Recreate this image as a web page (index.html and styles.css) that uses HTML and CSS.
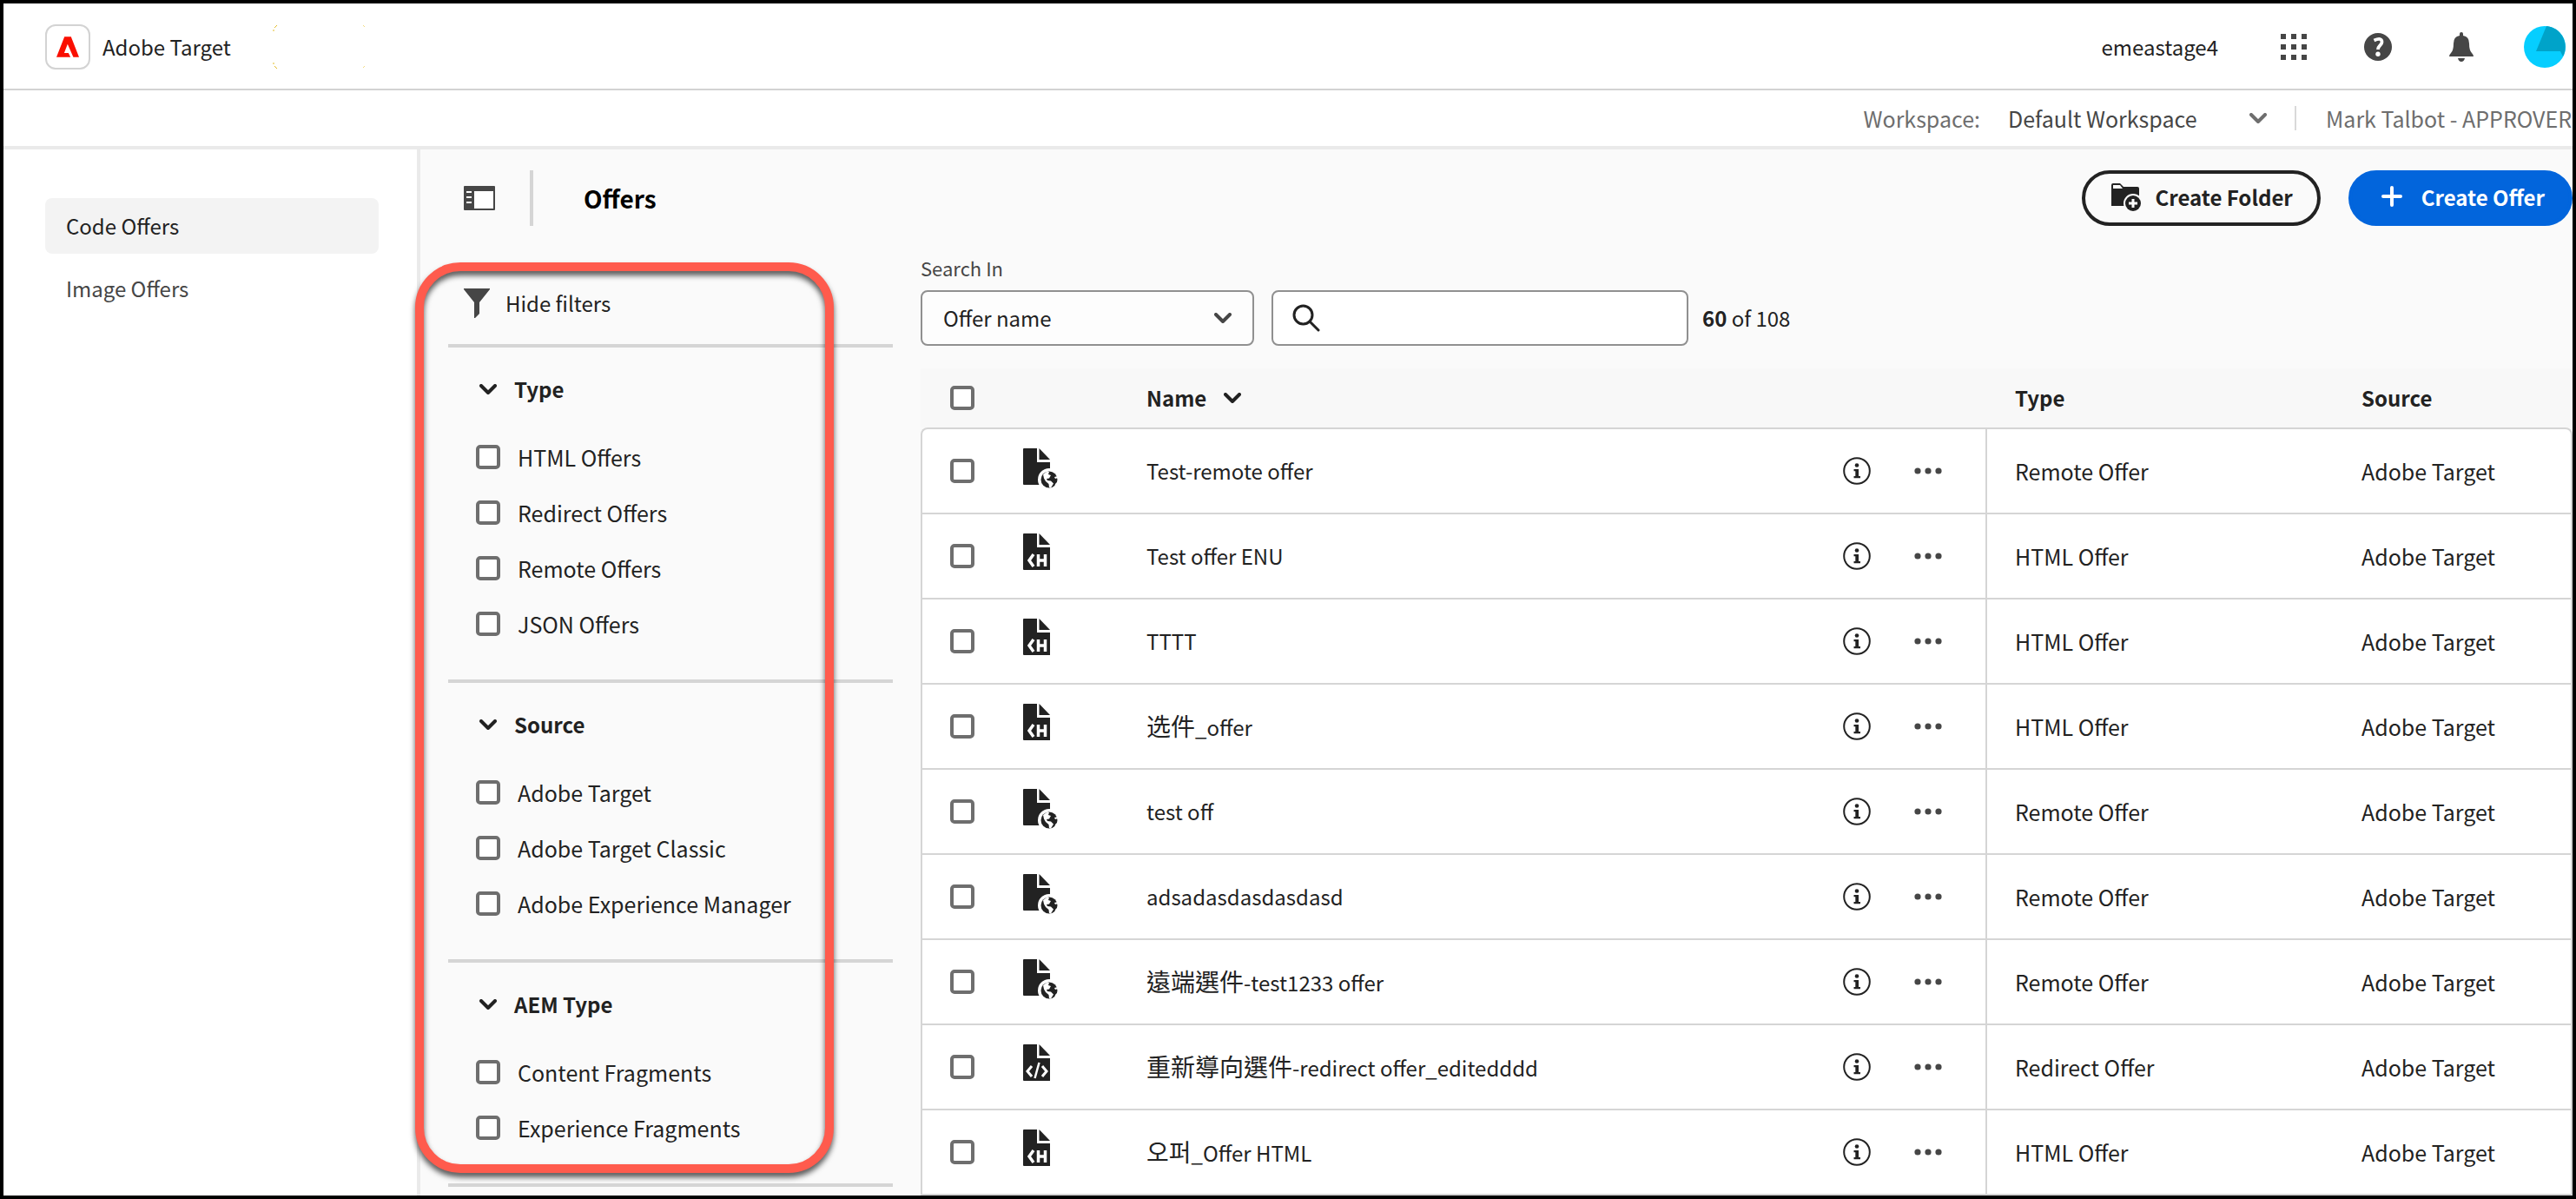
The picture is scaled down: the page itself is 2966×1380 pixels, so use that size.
FILE: index.html
```html
<!DOCTYPE html>
<html lang="en">
<head>
<meta charset="utf-8">
<title>Offers - Adobe Target</title>
<link rel="stylesheet" href="styles.css">
</head>
<body>
<svg class="sprite" aria-hidden="true">
  <symbol id="chevron" viewBox="0 0 20 12"><path d="M2 2l8 8 8-8" fill="none" stroke="currentColor" stroke-width="4" stroke-linecap="round" stroke-linejoin="round"/></symbol>
  <symbol id="page" viewBox="0 0 40 48"><path d="M1 2h15v16h15v26H1Q0 44 0 43V3Q0 2 1 2z M18.500 2l12.500 13H18.500z" fill="currentColor"/></symbol>
  <symbol id="remote" viewBox="0 0 40 48">
    <use href="#page" width="40" height="48"/>
    <circle cx="30" cy="38" r="13" fill="#fff"/>
    <circle cx="30" cy="38" r="9.500" fill="currentColor"/>
    <path d="M23 32l4-3 3 0-1 3 3 1-2 3.500-3 .5 1 2 4 .5 3 3-3 5-2-.5-.5-4-3.500-3-2-3.500z M36 35l4-1v2l-3 1z M37 43l2-2v3l-3 3z" fill="#fff"/>
  </symbol>
  <symbol id="html" viewBox="0 0 40 48">
    <use href="#page" width="40" height="48"/>
    <path d="M12 26l-5 7 5 7" fill="none" stroke="#fff" stroke-width="3.500"/>
    <path d="M17.500 26v14 M25.500 26v14 M17 33h9" fill="none" stroke="#fff" stroke-width="3.500"/>
  </symbol>
  <symbol id="redirect" viewBox="0 0 40 48">
    <use href="#page" width="40" height="48"/>
    <path d="M10 27l-5 6 5 6 M22 27l5 6-5 6" fill="none" stroke="#fff" stroke-width="3"/>
    <path d="M18.500 23l-5 18" fill="none" stroke="#fff" stroke-width="2.500"/>
  </symbol>
  <symbol id="info" viewBox="0 0 32 32">
    <circle cx="16" cy="16" r="14.800" fill="none" stroke="currentColor" stroke-width="2"/>
    <circle cx="16" cy="9.500" r="2.300" fill="currentColor"/>
    <path d="M12.500 14h5.500v8h2v2.200h-7.500V22h1.800v-5.800h-1.800z" fill="currentColor"/>
  </symbol>
  <symbol id="more" viewBox="0 0 32 8"><g fill="#464646"><circle cx="4" cy="4" r="3.600"/><circle cx="16" cy="4" r="3.600"/><circle cx="28" cy="4" r="3.600"/></g></symbol>
</svg>

<div class="app">
  <header class="topbar">
    <a class="brand" href="#">
      <span class="brand-mark"><svg width="26" height="24" viewBox="194 124 79 71"><path d="M194 195 222 124H245L273 195H253L233 150 221 181H236L243 195Z" fill="#fa0f00"/></svg></span>
      <span>Adobe Target</span>
    </a>
    <svg class="tag" width="108" height="52" viewBox="0 0 108 52" aria-hidden="true"><path d="M1 8V6M2 4l3-3M1 44v2M2 48l3 3" fill="none" stroke="#e3bd2a" stroke-width="1"/><path d="M104 1l2 2M106 48l-2 2" fill="none" stroke="#f3dc83" stroke-width="1"/></svg>
    <nav class="tools">
      <span class="org">emeastage4</span>
      <button class="tool" aria-label="Apps"><svg width="30" height="30" viewBox="0 0 30 30"><path d="M0 0h6v6H0zM12 0h6v6h-6zM24 0h6v6h-6zM0 12h6v6H0zM12 12h6v6h-6zM24 12h6v6h-6zM0 24h6v6H0zM12 24h6v6h-6zM24 24h6v6h-6z" fill="currentColor"/></svg></button>
      <button class="tool" aria-label="Help"><svg width="32" height="32" viewBox="0 0 32 32"><circle cx="16" cy="16" r="16" fill="currentColor"/><path d="M11.500 8.500Q20.500 4.500 20.500 10.500C20.500 14 16 14.500 16 19" fill="none" stroke="#fff" stroke-width="3.800"/><circle cx="16" cy="24.300" r="2.700" fill="#fff"/></svg></button>
      <button class="tool" aria-label="Notifications"><svg width="28" height="34" viewBox="0 0 28 34"><path d="M12 4V2q0-2 2-2t2 2v2q7 1 7 9 0 8 3 11 2 2 2 4H0q0-2 2-4 3-3 3-11 0-8 7-9zM10 30h8q-1 4-4 4t-4-4z" fill="currentColor"/></svg></button>
      <button class="tool avatar" aria-label="Account"><svg width="48" height="48" viewBox="0 0 48 48"><circle cx="24" cy="24" r="24" fill="#06ceff"/><path d="M26 0A24 24 0 0 1 45 35L42 29H14z" fill="#00a3c9"/></svg></button>
    </nav>
  </header>

  <div class="workspace">
    <label for="ws">Workspace:</label>
    <div class="ws-picker">
      <select id="ws"><option>Default Workspace</option></select>
      <svg class="chev" width="20" height="12"><use href="#chevron"/></svg>
    </div>
    <span class="user">Mark Talbot - APPROVER</span>
  </div>

  <div class="body">
    <nav class="side">
      <a class="side-link active" href="#">Code Offers</a>
      <a class="side-link" href="#">Image Offers</a>
    </nav>

    <main class="main">
      <div class="title-bar">
        <button class="rail-toggle" aria-label="Toggle rail"><svg width="36" height="28" viewBox="0 0 36 28"><path d="M1 0h34q1 0 1 1v26q0 1-1 1H1q-1 0-1-1V1q0-1 1-1z" fill="#464646"/><path d="M12 6h22v20H12zM3 6h6v2H3zM3 12h6v2H3zM3 18h6v2H3z" fill="#fff"/></svg></button>
        <h1>Offers</h1>
        <div class="actions">
          <button class="btn outline"><svg width="36" height="36" viewBox="0 0 36 36"><path d="M2 4q0-2 2-2h8l4 4h16q2 0 2 2v20H2z" fill="currentColor"/><path d="M4 4h8l3 4H4z" fill="#fafafa"/><circle cx="27" cy="25" r="11" fill="#fafafa"/><circle cx="27" cy="25" r="9" fill="currentColor"/><path d="M27 20v10M22 25h10" stroke="#fff" stroke-width="3"/></svg>Create Folder</button>
          <button class="btn accent"><svg width="36" height="36" viewBox="0 0 36 36"><path d="M18 7v20M8 17h20" stroke="currentColor" stroke-width="4" stroke-linecap="round"/></svg>Create Offer</button>
        </div>
      </div>

      <div class="columns">
        <aside class="filters">
          <button class="hide-filters"><svg width="30" height="34" viewBox="0 0 30 34"><path d="M0 0h30v1L18 16v13l-5 5h-1V16L0 1z" fill="#464646"/></svg>Hide filters</button>
          <section class="group">
            <h2><button><svg width="20" height="12"><use href="#chevron"/></svg>Type</button></h2>
            <label><input type="checkbox">HTML Offers</label>
            <label><input type="checkbox">Redirect Offers</label>
            <label><input type="checkbox">Remote Offers</label>
            <label><input type="checkbox">JSON Offers</label>
          </section>
          <section class="group">
            <h2><button><svg width="20" height="12"><use href="#chevron"/></svg>Source</button></h2>
            <label><input type="checkbox">Adobe Target</label>
            <label><input type="checkbox">Adobe Target Classic</label>
            <label><input type="checkbox">Adobe Experience Manager</label>
          </section>
          <section class="group">
            <h2><button><svg width="20" height="12"><use href="#chevron"/></svg>AEM Type</button></h2>
            <label><input type="checkbox">Content Fragments</label>
            <label><input type="checkbox">Experience Fragments</label>
          </section>
          <hr class="rule">
          <div class="callout"></div>
        </aside>

        <section class="results">
          <label class="field-label" for="searchin">Search In</label>
          <div class="search-row">
            <div class="picker">
              <select id="searchin"><option>Offer name</option></select>
              <svg class="chev" width="20" height="12"><use href="#chevron"/></svg>
            </div>
            <div class="search">
              <svg width="32" height="32" viewBox="0 0 32 32"><g fill="none" stroke="#222" stroke-width="3" stroke-linecap="round"><circle cx="12.500" cy="12.500" r="10.500"/><path d="M20 20l10 10"/></g></svg>
              <input type="search" aria-label="Search offers">
            </div>
            <span class="count"><b>60</b> of 108</span>
          </div>

          <table>
            <colgroup><col class="c-check"><col class="c-icon"><col><col class="c-act"><col class="c-type"><col class="c-src"></colgroup>
            <thead>
              <tr><th class="check"><input type="checkbox" aria-label="Select all"></th><th></th><th><button class="sort">Name<svg width="20" height="12"><use href="#chevron"/></svg></button></th><th></th><th class="pad">Type</th><th class="pad">Source</th></tr>
            </thead>
            <tbody>
              <tr><td class="check"><input type="checkbox" aria-label="Select"></td><td class="kind"><svg width="40" height="48"><use href="#remote"/></svg></td><td>Test-remote offer</td><td class="act"><div><button aria-label="Info"><svg width="32" height="32"><use href="#info"/></svg></button><button aria-label="More"><svg width="32" height="8"><use href="#more"/></svg></button></div></td><td class="pad">Remote Offer</td><td class="pad">Adobe Target</td></tr>
              <tr><td class="check"><input type="checkbox" aria-label="Select"></td><td class="kind"><svg width="40" height="48"><use href="#html"/></svg></td><td>Test offer ENU</td><td class="act"><div><button aria-label="Info"><svg width="32" height="32"><use href="#info"/></svg></button><button aria-label="More"><svg width="32" height="8"><use href="#more"/></svg></button></div></td><td class="pad">HTML Offer</td><td class="pad">Adobe Target</td></tr>
              <tr><td class="check"><input type="checkbox" aria-label="Select"></td><td class="kind"><svg width="40" height="48"><use href="#html"/></svg></td><td>TTTT</td><td class="act"><div><button aria-label="Info"><svg width="32" height="32"><use href="#info"/></svg></button><button aria-label="More"><svg width="32" height="8"><use href="#more"/></svg></button></div></td><td class="pad">HTML Offer</td><td class="pad">Adobe Target</td></tr>
              <tr><td class="check"><input type="checkbox" aria-label="Select"></td><td class="kind"><svg width="40" height="48"><use href="#html"/></svg></td><td><span class="cjk" lang="zh-Hans">选件</span>_offer</td><td class="act"><div><button aria-label="Info"><svg width="32" height="32"><use href="#info"/></svg></button><button aria-label="More"><svg width="32" height="8"><use href="#more"/></svg></button></div></td><td class="pad">HTML Offer</td><td class="pad">Adobe Target</td></tr>
              <tr><td class="check"><input type="checkbox" aria-label="Select"></td><td class="kind"><svg width="40" height="48"><use href="#remote"/></svg></td><td>test off</td><td class="act"><div><button aria-label="Info"><svg width="32" height="32"><use href="#info"/></svg></button><button aria-label="More"><svg width="32" height="8"><use href="#more"/></svg></button></div></td><td class="pad">Remote Offer</td><td class="pad">Adobe Target</td></tr>
              <tr><td class="check"><input type="checkbox" aria-label="Select"></td><td class="kind"><svg width="40" height="48"><use href="#remote"/></svg></td><td>adsadasdasdasdasd</td><td class="act"><div><button aria-label="Info"><svg width="32" height="32"><use href="#info"/></svg></button><button aria-label="More"><svg width="32" height="8"><use href="#more"/></svg></button></div></td><td class="pad">Remote Offer</td><td class="pad">Adobe Target</td></tr>
              <tr><td class="check"><input type="checkbox" aria-label="Select"></td><td class="kind"><svg width="40" height="48"><use href="#remote"/></svg></td><td><span class="cjk" lang="zh-Hant">遠端選件</span>-test1233 offer</td><td class="act"><div><button aria-label="Info"><svg width="32" height="32"><use href="#info"/></svg></button><button aria-label="More"><svg width="32" height="8"><use href="#more"/></svg></button></div></td><td class="pad">Remote Offer</td><td class="pad">Adobe Target</td></tr>
              <tr><td class="check"><input type="checkbox" aria-label="Select"></td><td class="kind"><svg width="40" height="48"><use href="#redirect"/></svg></td><td><span class="cjk" lang="zh-Hant">重新導向選件</span>-redirect offer_editedddd</td><td class="act"><div><button aria-label="Info"><svg width="32" height="32"><use href="#info"/></svg></button><button aria-label="More"><svg width="32" height="8"><use href="#more"/></svg></button></div></td><td class="pad">Redirect Offer</td><td class="pad">Adobe Target</td></tr>
              <tr><td class="check"><input type="checkbox" aria-label="Select"></td><td class="kind"><svg width="40" height="48"><use href="#html"/></svg></td><td><span class="cjk" lang="ko">오퍼</span>_Offer HTML</td><td class="act"><div><button aria-label="Info"><svg width="32" height="32"><use href="#info"/></svg></button><button aria-label="More"><svg width="32" height="8"><use href="#more"/></svg></button></div></td><td class="pad">HTML Offer</td><td class="pad">Adobe Target</td></tr>
            </tbody>
          </table>
        </section>
      </div>
    </main>
  </div>
</div>
</body>
</html>
```
FILE: styles.css
```css
* { box-sizing: border-box; }

body {
  margin: 0;
  font: 24px/32px "Noto Sans CJK SC", "Noto Sans", sans-serif;
  color: #222;
  background: #fff;
}

button, select, input {
  font: inherit;
  color: inherit;
  margin: 0;
}

button {
  padding: 0;
  border: 0;
  background: none;
}

a { color: inherit; text-decoration: none; }
svg { display: block; flex: none; }
.sprite { position: absolute; width: 0; height: 0; }

input[type="checkbox"] {
  appearance: none;
  display: block;
  flex: none;
  width: 28px;
  height: 28px;
  border: 4px solid #6e6e6e;
  border-radius: 5px;
  background: #fff;
}

.app {
  display: flex;
  flex-direction: column;
  min-height: 100vh;
  border: 4px solid #000;
  overflow: hidden;
}

/* Top bar */
.topbar {
  display: flex;
  align-items: center;
  height: 100px;
  padding: 2px 8px 0 48px;
  border-bottom: 2px solid #d3d3d3;
}

.brand {
  display: flex;
  align-items: center;
  gap: 14px;
}

.brand-mark {
  display: grid;
  place-items: center;
  width: 52px;
  height: 52px;
  border: 2px solid #d3d3d3;
  border-radius: 12px;
}

.tag { margin-left: 48px; }

.tools {
  display: flex;
  align-items: center;
  gap: 66px;
  margin-left: auto;
  color: #464646;
}

.org { color: #222; margin-right: 6px; }
.avatar { margin-left: -8px; }

/* Workspace bar */
.workspace {
  display: flex;
  align-items: center;
  justify-content: flex-end;
  height: 68px;
  border-bottom: 4px solid #eaeaea;
  font-size: 25px;
  color: #6e6e6e;
}

.ws-picker {
  position: relative;
  width: 332px;
  height: 28px;
  margin-left: 32px;
  border-right: 2px solid #d9d9d9;
}

.ws-picker select {
  appearance: none;
  display: block;
  width: 100%;
  height: 32px;
  margin-top: -2px;
  padding: 0;
  border: 0;
  background: none;
  color: #464646;
}

.chev {
  position: absolute;
  right: 26px;
  top: 50%;
  margin-top: -6px;
  color: #464646;
  pointer-events: none;
}

.ws-picker .chev { right: 32px; color: #6e6e6e; }

.user {
  width: 318px;
  padding-left: 34px;
  white-space: nowrap;
}

/* Body */
.body { display: flex; flex: 1; }

.side {
  display: flex;
  flex: none;
  flex-direction: column;
  gap: 8px;
  width: 480px;
  padding: 56px 44px 0 48px;
  border-right: 4px solid #eaeaea;
}

.side-link {
  padding: 16px 24px;
  border-radius: 8px;
  color: #464646;
}

.side-link.active { background: #f3f3f3; color: #222; }

.main {
  flex: 1;
  min-width: 0;
  background: #fafafa;
}

.title-bar {
  display: flex;
  align-items: center;
  height: 64px;
  margin-top: 24px;
  padding-left: 50px;
}

.rail-toggle {
  display: flex;
  align-items: center;
  width: 80px;
  height: 64px;
  border-right: 4px solid #d5d5d5;
}

h1 {
  margin: 0 0 0 58px;
  font-size: 28px;
  line-height: 32px;
  color: #000;
}

.actions {
  display: flex;
  gap: 32px;
  margin-left: auto;
}

.btn {
  display: flex;
  align-items: center;
  gap: 16px;
  height: 64px;
  padding: 0 28px 2px;
  border: 4px solid #222;
  border-radius: 32px;
  font-weight: 700;
  white-space: nowrap;
}

.btn.accent {
  border-color: #0265dc;
  background: #0265dc;
  color: #fff;
}

.columns { display: flex; }

/* Filters */
.filters {
  position: relative;
  flex: none;
  width: 512px;
  margin: 42px 32px 0;
}

.hide-filters {
  display: flex;
  align-items: center;
  gap: 18px;
  height: 94px;
  padding-left: 18px;
}

.group {
  padding-bottom: 32px;
  border-top: 4px solid #d5d5d5;
}

.group h2 {
  display: flex;
  align-items: center;
  height: 94px;
  margin: 0;
  padding: 2px 0 0 36px;
  font-size: 24px;
  line-height: 32px;
}

.group h2 button {
  display: flex;
  align-items: center;
  gap: 20px;
}

.group label {
  display: flex;
  align-items: center;
  gap: 20px;
  height: 64px;
  padding-left: 32px;
  font-size: 25px;
}

.rule {
  height: 4px;
  margin: 0;
  border: 0;
  background: #d5d5d5;
}

.callout {
  position: absolute;
  top: 0;
  left: -38px;
  width: 482px;
  height: 1048px;
  border: 10px solid #ff5b4d;
  border-radius: 52px;
  filter: drop-shadow(0 5px 3px rgba(0, 0, 0, 0.65));
  pointer-events: none;
}

/* Results */
.results {
  flex: 1;
  min-width: 0;
  padding-top: 34px;
}

.field-label {
  display: block;
  font-size: 22px;
  line-height: 28px;
  color: #464646;
}

.search-row {
  display: flex;
  align-items: center;
  margin: 12px 0 26px;
}

.picker {
  position: relative;
  width: 384px;
}

.picker select {
  appearance: none;
  display: block;
  width: 100%;
  height: 64px;
  padding: 0 24px;
  border: 2px solid #909090;
  border-radius: 8px;
  background: #fdfdfd;
}

.search {
  display: flex;
  align-items: center;
  gap: 16px;
  width: 480px;
  height: 64px;
  margin: 0 16px 0 20px;
  padding: 0 22px;
  border: 2px solid #909090;
  border-radius: 8px;
  background: #fff;
}

.search input {
  appearance: none;
  flex: 1;
  min-width: 0;
  border: 0;
  background: none;
}

table {
  width: 100%;
  table-layout: fixed;
  border-collapse: separate;
  border-spacing: 0;
}

.c-check { width: 118px; }
.c-icon { width: 142px; }
.c-act { width: 166px; }
.c-type { width: 399px; }
.c-src { width: 275px; }

th, td { padding: 0; text-align: left; }
th { height: 68px; background: #f8f8f8; }

td {
  height: 98px;
  border-bottom: 2px solid #d5d5d5;
  background: #fff;
}

td:first-child { border-left: 2px solid #d5d5d5; }
td:last-child { border-right: 2px solid #d5d5d5; }

tbody tr:first-child td { height: 100px; border-top: 2px solid #d5d5d5; }
tbody tr:first-child td:first-child { border-top-left-radius: 8px; }
tbody tr:first-child td:last-child { border-top-right-radius: 8px; }

td.check { padding-left: 32px; }
th.check { padding-left: 34px; }
.kind { padding-bottom: 8px; }
.pad { padding-left: 32px; }
td.pad { font-size: 25px; }
.act { border-right: 2px solid #d5d5d5; }

.act div {
  display: flex;
  align-items: center;
  gap: 50px;
}

.sort {
  display: flex;
  align-items: center;
  gap: 20px;
  font-weight: 700;
}

.cjk {
  font-size: 28px;
}

.cjk:lang(zh-Hant) { font-family: "Noto Sans CJK TC", sans-serif; }
.cjk:lang(ko) { font-family: "Noto Sans CJK KR", sans-serif; }
```
